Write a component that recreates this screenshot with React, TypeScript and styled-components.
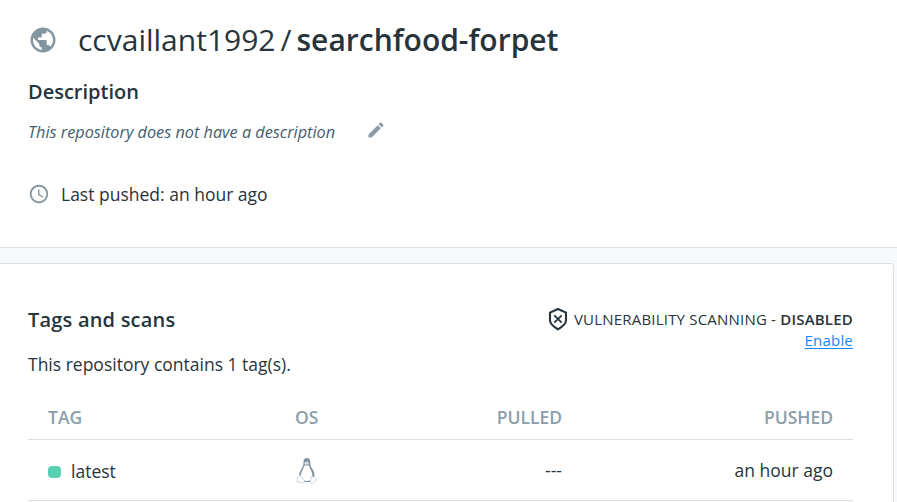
import React from 'react';
import styled, { createGlobalStyle } from 'styled-components';

const GlobalStyle = createGlobalStyle`
  * { box-sizing: border-box; }
  body {
    margin: 0;
    background: #f7f8fa;
    color: #27343b;
    font-family: 'Open Sans', 'Noto Sans', sans-serif;
    font-size: 17.5px;
    overflow: hidden;
  }
`;

const Page = styled.div`
  height: 502px;
  display: flex;
  flex-direction: column;
  overflow: hidden;
  white-space: nowrap;
`;

const Header = styled.header`
  flex: none;
  height: 248px;
  padding: 19px 28px 0;
  background: #fff;
  border-bottom: 1px solid #dde0e3;
`;

const TitleRow = styled.div`
  display: flex;
  align-items: center;
  height: 41px;
  svg { margin: 0 20px 0 0; }
`;

const Title = styled.h1`
  margin: 0;
  font-size: 30px;
  line-height: 41px;
  font-weight: 400;
`;

const RepoName = styled.span`
  font-weight: 600;
`;

const Slash = styled.span`
  margin: 0 5px 0 5px;
`;

const Heading = styled.h2`
  margin: 0;
  font-size: 20px;
  line-height: 28px;
  font-weight: 600;
`;

const DescriptionHeading = styled(Heading)`
  margin-top: 18px;
`;

const PanelHeading = styled(Heading)`
  padding-top: 1px;
  letter-spacing: 0.2px;
`;

const DescriptionRow = styled.div`
  display: flex;
  align-items: center;
  gap: 31px;
  height: 24px;
  margin-top: 14px;
  color: #445d6e;
  font-size: 16.25px;
  font-style: italic;
  svg { position: relative; top: -2px; }
`;

const PushedRow = styled.div`
  display: flex;
  align-items: center;
  gap: 11px;
  height: 26px;
  margin-top: 37px;
`;

const Panel = styled.main`
  flex: 1;
  width: 894px;
  margin-top: 15px;
  padding: 41px 40px 0 28px;
  background: #fff;
  border: 1px solid #dde0e3;
  border-left: 0;
  border-bottom: 0;
  border-top-right-radius: 3px;
`;

const PanelTop = styled.div`
  display: flex;
  justify-content: space-between;
  height: 46px;
`;

const Scanning = styled.div`
  display: flex;
  flex-direction: column;
  align-items: flex-end;
  padding-top: 3px;
  font-size: 15px;
  line-height: 21px;
  letter-spacing: 0.2px;
`;

const ScanStatus = styled.div`
  display: flex;
  align-items: center;
  height: 22px;
  gap: 6px;
  strong { font-weight: 600; }
`;

const EnableLink = styled.a`
  color: #1687f8;
  text-decoration: underline;
  text-decoration-thickness: 1px;
  text-underline-offset: 2px;
`;

const Summary = styled.p`
  margin: 0;
  line-height: 26px;
`;

const Table = styled.div`
  margin-top: 17px;
`;

const Row = styled.div<{ $head?: boolean }>`
  display: grid;
  grid-template-columns: 247px 150px 1fr 271px;
  align-items: center;
  height: ${(p) => (p.$head ? 46 : 61)}px;
  padding: 0 20px;
  border-bottom: 1px solid #dcdfe1;
  color: ${(p) => (p.$head ? '#8c9eaa' : 'inherit')};
  font-weight: ${(p) => (p.$head ? 600 : 400)};
`;

const Cell = styled.div<{ $right?: boolean }>`
  display: flex;
  align-items: center;
  justify-content: ${(p) => (p.$right ? 'flex-end' : 'flex-start')};
`;

const TagCell = styled(Cell)`
  padding-top: 2px;
`;

const OsCell = styled(Cell)`
  padding-left: 1px;
`;

const StatusDot = styled.i`
  width: 13px;
  height: 12px;
  margin: 2px 10px 0 0;
  border-radius: 4px;
  background: #58d1b1;
`;

const GlobeIcon = () => (
  <svg width="30" height="30" viewBox="0 0 24 24" fill="#8395a0">
    <path d="M12 2C6.48 2 2 6.48 2 12s4.48 10 10 10 10-4.48 10-10S17.52 2 12 2zm-1 17.93c-3.95-.49-7-3.85-7-7.93 0-.62.08-1.21.21-1.79L9 15v1c0 1.1.9 2 2 2v1.93zm6.9-2.54c-.26-.81-1-1.39-1.9-1.39h-1v-3c0-.55-.45-1-1-1H8v-2h2c.55 0 1-.45 1-1V7h2c1.1 0 2-.9 2-2v-.41c2.93 1.19 5 4.06 5 7.41 0 2.08-.8 3.97-2.1 5.39z" />
  </svg>
);

const PencilIcon = () => (
  <svg width="20" height="20" viewBox="0 0 24 24" fill="#8c9ba8">
    <path d="M3 17.25V21h3.75L17.81 9.94l-3.75-3.75L3 17.25zM20.71 7.04a1 1 0 0 0 0-1.41l-2.34-2.34a1 1 0 0 0-1.41 0l-1.83 1.83 3.75 3.75 1.83-1.83z" />
  </svg>
);

const ClockIcon = () => (
  <svg width="22" height="22" viewBox="0 0 24 24" fill="#8395a0">
    <path d="M11.99 2C6.47 2 2 6.48 2 12s4.47 10 9.99 10C17.52 22 22 17.52 22 12S17.52 2 11.99 2zM12 20c-4.42 0-8-3.58-8-8s3.58-8 8-8 8 3.58 8 8-3.58 8-8 8zm.5-13H11v6l5.25 3.15.75-1.23-4.5-2.67z" />
  </svg>
);

const ShieldIcon = () => (
  <svg width="20" height="24" viewBox="0 0 20 24" fill="none" stroke="#27343b" strokeWidth="2.1">
    <path d="M10 2 18 5.600V13.300C18 17.300 14.300 19.800 10 22.300 5.700 19.800 2 17.300 2 13.300V5.600Z" />
    <path d="m6.300 8.300 7.400 7.400m0-7.400-7.400 7.400" strokeWidth="1.8" />
  </svg>
);

const LinuxIcon = () => (
  <svg width="22" height="27" viewBox="0 0 22 27">
    <path
      d="M7.5 4.8C7.5 2.2 8.7 1 10.8 1s3.5 1.4 3.5 4c0 3.8.8 4.8 2.5 7.5 1.5 2.500 2.200 5.500 1.200 8.200l-3.500 1.300-7.500 0-4-3.500c0-2.500 1.200-4.500 2.500-6.700C6.900 9.400 7.600 8.500 7.500 4.800Z"
      fill="#80939d"
    />
    <path d="M8.700 8c-.5 2.500-3.900 7-3.900 11l3.300 5h6l2.300-4.500c.3-4-2.600-8.200-3.700-11.500l-1.800.9Z" fill="#fff" />
    <path d="M8.400 5.500 10.700 4.600 12.900 5.500 12.600 7.200 10.700 8.100 8.700 7.200Z" fill="#d6dce0" />
    <path
      d="M4.300 18.300 8.400 24c.2 1.500-1.200 2.200-2.500 1.700L1 24.400l.4-4.200Z M15.300 19.500c.8 1 2.800.7 3.400-.5l.8 2 1.600 1.600-4.600 3.500c-1.200.3-2-.4-2-1.600Z"
      fill="#fff"
      stroke="#ccd2d5"
      strokeWidth=".9"
    />
    <path d="M8.300 24c2 .9 4.200.9 6.100-.2" fill="none" stroke="#80939d" strokeWidth="1.200" />
  </svg>
);

export default function App() {
  return (
    <Page>
      <GlobalStyle />
      <Header>
        <TitleRow>
          <GlobeIcon />
          <Title>
            ccvaillant1992<Slash>/</Slash>
            <RepoName>searchfood-forpet</RepoName>
          </Title>
        </TitleRow>
        <DescriptionHeading>Description</DescriptionHeading>
        <DescriptionRow>
          <span>This repository does not have a description</span>
          <PencilIcon />
        </DescriptionRow>
        <PushedRow>
          <ClockIcon />
          <span>Last pushed: an hour ago</span>
        </PushedRow>
      </Header>
      <Panel>
        <PanelTop>
          <PanelHeading>Tags and scans</PanelHeading>
          <Scanning>
            <ScanStatus>
              <ShieldIcon />
              <span>
                VULNERABILITY SCANNING - <strong>DISABLED</strong>
              </span>
            </ScanStatus>
            <EnableLink href="#">Enable</EnableLink>
          </Scanning>
        </PanelTop>
        <Summary>This repository contains 1 tag(s).</Summary>
        <Table>
          <Row $head>
            <Cell>TAG</Cell>
            <Cell>OS</Cell>
            <Cell $right>PULLED</Cell>
            <Cell $right>PUSHED</Cell>
          </Row>
          <Row>
            <TagCell>
              <StatusDot />
              latest
            </TagCell>
            <OsCell>
              <LinuxIcon />
            </OsCell>
            <Cell $right>---</Cell>
            <Cell $right>an hour ago</Cell>
          </Row>
        </Table>
      </Panel>
    </Page>
  );
}
